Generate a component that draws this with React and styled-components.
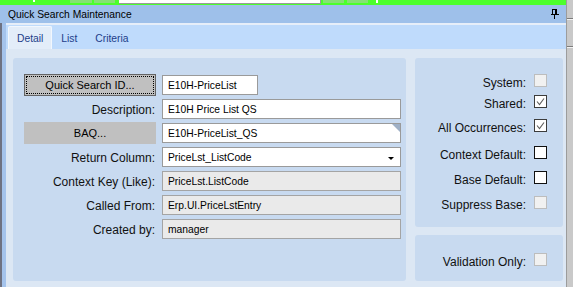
import React from "react";
import styled, { createGlobalStyle } from "styled-components";

const Global = createGlobalStyle`
  html, body { margin: 0; padding: 0; background: #dce7f4; }
  body { font-family: "Liberation Sans", Arial, sans-serif; }
  * { box-sizing: border-box; }
`;

const Screen = styled.div`
  width: 573px;
  height: 287px;
  display: flex;
  overflow: hidden;
`;

const Main = styled.div`
  width: 566px;
  display: flex;
  flex-direction: column;
`;

const ScrollEdge = styled.div`
  width: 7px;
  background: #c9c9c9;
  border-left: 1px solid #9c9c9c;
  display: flex;
  flex-direction: column;
`;

const ScrollLine = styled.div`
  height: 2px;
  margin-top: ${(p) => p.$top}px;
  border-top: 1px solid #7c7c7c;
  border-bottom: 1px solid #f2f2f2;
`;

const GreenBar = styled.div`
  height: 5px;
  background: #4cff2c;
  display: flex;
  align-items: flex-start;
`;

const GreenMark = styled.div`
  margin-left: ${(p) => p.$ml}px;
  width: ${(p) => p.$w}px;
  height: ${(p) => p.$h}px;
  background: ${(p) => p.$bg};
  border-bottom: ${(p) => (p.$edge ? "1px solid #9a9a9a" : "none")};
  border-right: ${(p) => (p.$edge ? "1px solid #9a9a9a" : "none")};
`;

const TitleBar = styled.div`
  height: 18px;
  background: #9ec0ea;
  display: flex;
  align-items: center;
  justify-content: space-between;
  padding: 0 7px 0 8px;
  font-size: 10.3px;
  color: #000;
`;

const Body = styled.div`
  flex: 1;
  display: flex;
`;

const LeftEdge = styled.div`
  width: 6px;
  background: #a4c3ec;
  border-left: 2px solid #6e7282;
`;

const Content = styled.div`
  flex: 1;
  display: flex;
  flex-direction: column;
  border-top: 2px solid #e6eef9;
`;

const TabStrip = styled.div`
  height: 24px;
  background: #bfdbfc;
  display: flex;
  align-items: flex-end;
  padding-left: 2px;
`;

const Tab = styled.div`
  height: 23px;
  padding: 0 8px;
  display: flex;
  align-items: center;
  font-size: 10.3px;
  color: #1d3d8a;
  background: ${(p) => (p.$active ? "#e3edf9" : "transparent")};
  border: 1px solid ${(p) => (p.$active ? "#f2f7fd" : "transparent")};
  border-bottom: none;
  border-radius: 2px 2px 0 0;
`;

const Pane = styled.div`
  flex: 1;
  background: #dce7f4;
  display: flex;
  gap: 9px;
  padding: 9px 3px 6px 7px;
`;

const Panel = styled.div`
  background: #c8daf0;
  border-radius: 3px;
`;

const FormPanel = styled(Panel)`
  width: 393px;
  padding: 16px 0 0 11px;
  display: grid;
  grid-template-columns: 132px 239px;
  grid-auto-rows: 22px;
  column-gap: 6px;
  row-gap: 2px;
  align-content: start;
  align-items: center;
`;

const SideColumn = styled.div`
  flex: 1;
  display: flex;
  flex-direction: column;
  gap: 8px;
`;

const FlagPanel = styled(Panel)`
  flex: ${(p) => (p.$grow ? 1 : "none")};
  height: ${(p) => (p.$grow ? "auto" : "46px")};
  padding: ${(p) => p.$pt}px 16px 0 0;
  display: flex;
  flex-direction: column;
  align-items: flex-end;
`;

const Label = styled.div`
  font-size: 12px;
  color: #111;
  text-align: right;
  padding: 1px 1px 0 0;
  white-space: nowrap;
`;

const PushButton = styled.div`
  height: 22px;
  background: #c0c0c0;
  border: 1px solid ${(p) => (p.$flat ? "#c0c0c0" : "#646464")};
  padding: 1px;
  display: flex;
  font-size: 11px;
  color: #000;
`;

const ButtonFace = styled.div`
  flex: 1;
  display: flex;
  align-items: center;
  justify-content: center;
  border: 1px dotted ${(p) => (p.$focus ? "#000" : "transparent")};
`;

const Field = styled.div`
  position: relative;
  height: 20px;
  width: ${(p) => (p.$narrow ? "96px" : "239px")};
  background: ${(p) => (p.$disabled ? "#eaeaea" : "#fff")};
  border: 1px solid ${(p) => (p.$disabled ? "#a4a4a4" : "#9a9a9a")};
  display: flex;
  align-items: center;
  justify-content: space-between;
  padding: 0 4px 0 5px;
  font-size: 10.3px;
  color: #000;
  white-space: nowrap;
`;

const CornerFlag = styled.span`
  position: absolute;
  top: 0;
  right: 0;
  width: 0;
  height: 0;
  border-top: 8px solid #9fb0c6;
  border-left: 8px solid transparent;
`;

const DropArrow = styled.span`
  width: 0;
  height: 0;
  margin-top: 2px;
  margin-right: 2px;
  border-left: 3px solid transparent;
  border-right: 3px solid transparent;
  border-top: 3px solid #000;
`;

const FlagRow = styled.div`
  display: flex;
  align-items: flex-start;
  gap: 8px;
  margin-top: ${(p) => p.$mt || 0}px;
`;

const FlagLabel = styled.div`
  font-size: 12px;
  color: #111;
  height: 13px;
  line-height: 18px;
  white-space: nowrap;
`;

const Box = styled.div`
  width: 13px;
  height: 13px;
  display: flex;
  align-items: center;
  justify-content: center;
  background: ${(p) => (p.$disabled ? "#f1f1f1" : "#fff")};
  border: 1px solid ${(p) => (p.$disabled ? "#bdbdbd" : p.$checked ? "#3c3c3c" : "#111")};
`;

const Pin = () => (
  <svg width="8" height="10" viewBox="0 0 8 10">
    <rect x="1.5" y="0.5" width="4" height="5" fill="none" stroke="#000" />
    <rect x="4" y="0" width="2" height="6" fill="#000" />
    <rect x="0" y="5" width="8" height="1" fill="#000" />
    <rect x="3" y="6" width="1" height="4" fill="#000" />
  </svg>
);

const Check = () => (
  <svg width="11" height="11" viewBox="0 0 11 11">
    <polyline points="2,5.5 4.5,8.5 9,2.5" fill="none" stroke="#5e5e5e" strokeWidth="1.1" />
  </svg>
);

const Flag = ({ label, checked, disabled, mt }) => (
  <FlagRow $mt={mt}>
    <FlagLabel>{label}</FlagLabel>
    <Box $checked={checked} $disabled={disabled}>
      {checked && <Check />}
    </Box>
  </FlagRow>
);

export default function App() {
  return (
    <>
      <Global />
      <Screen>
        <Main>
          <GreenBar>
            <GreenMark $ml={33} $w={2} $h={2} $bg="#ffffff" />
            <GreenMark $ml={35} $w={22} $h={3} $bg="#86e274" />
            <GreenMark $ml={2} $w={21} $h={3} $bg="#86e274" />
            <GreenMark $ml={4} $w={202} $h={4} $bg="#ffffff" $edge />
            <GreenMark $ml={2} $w={21} $h={3} $bg="#86e274" />
            <GreenMark $ml={3} $w={21} $h={3} $bg="#86e274" />
            <GreenMark $ml={8} $w={2} $h={3} $bg="#ffffff" />
          </GreenBar>
          <TitleBar>
            <span>Quick Search Maintenance</span>
            <Pin />
          </TitleBar>
          <Body>
            <LeftEdge />
            <Content>
              <TabStrip>
                <Tab $active>Detail</Tab>
                <Tab>List</Tab>
                <Tab>Criteria</Tab>
              </TabStrip>
              <Pane>
                <FormPanel>
                  <PushButton>
                    <ButtonFace $focus>Quick Search ID...</ButtonFace>
                  </PushButton>
                  <Field $narrow>E10H-PriceList</Field>

                  <Label>Description:</Label>
                  <Field>E10H Price List QS</Field>

                  <PushButton $flat>
                    <ButtonFace>BAQ...</ButtonFace>
                  </PushButton>
                  <Field>
                    E10H-PriceList_QS
                    <CornerFlag />
                  </Field>

                  <Label>Return Column:</Label>
                  <Field>
                    PriceLst_ListCode
                    <DropArrow />
                  </Field>

                  <Label>Context Key (Like):</Label>
                  <Field $disabled>PriceLst.ListCode</Field>

                  <Label>Called From:</Label>
                  <Field $disabled>Erp.UI.PriceLstEntry</Field>

                  <Label>Created by:</Label>
                  <Field $disabled>manager</Field>
                </FormPanel>
                <SideColumn>
                  <FlagPanel $grow $pt={16}>
                    <Flag label="System:" disabled />
                    <Flag label="Shared:" checked mt={8} />
                    <Flag label="All Occurrences:" checked mt={11} />
                    <Flag label="Context Default:" mt={14} />
                    <Flag label="Base Default:" mt={12} />
                    <Flag label="Suppress Base:" disabled mt={12} />
                  </FlagPanel>
                  <FlagPanel $pt={18}>
                    <Flag label="Validation Only:" disabled />
                  </FlagPanel>
                </SideColumn>
              </Pane>
            </Content>
          </Body>
        </Main>
        <ScrollEdge>
          <ScrollLine $top={18} />
          <ScrollLine $top={26} />
        </ScrollEdge>
      </Screen>
    </>
  );
}
